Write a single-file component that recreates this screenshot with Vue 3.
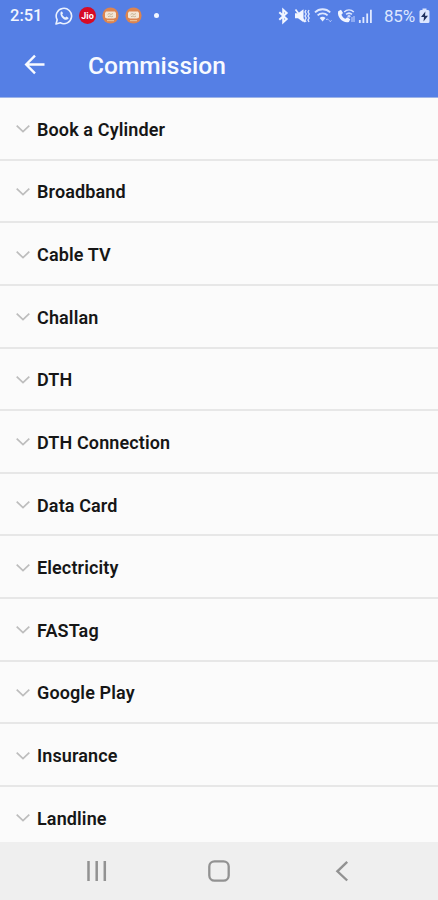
<script setup>
const categories = [
  'Book a Cylinder', 'Broadband', 'Cable TV', 'Challan', 'DTH', 'DTH Connection',
  'Data Card', 'Electricity', 'FASTag', 'Google Play', 'Insurance', 'Landline'
]
</script>

<template>
  <div class="screen">
    <header class="top">
      <div class="status">
        <span class="time">2:51</span>
        <svg class="whatsapp" width="18" height="18" viewBox="0 0 18 18" fill="none">
          <path d="M1 17 2.2 12.8A7.7 7.7 0 1 1 5.3 15.8Z" stroke="#eaf1ff" stroke-width="1.6" stroke-linejoin="round" />
          <path d="M5.7 4.9c.8-.8 1.4-.5 1.7.2l.6 1.4-.8 1.1c.7 1.4 1.7 2.3 3.1 2.9l1-1 1.8.9c.8.4.3 1.4-.3 1.9-3 2-8.7-3-7.1-7.4Z" fill="#eaf1ff" />
        </svg>
        <span class="jio">Jio</span>
        <svg v-for="n in 2" :key="n" class="app-badge" width="17" height="17" viewBox="0 0 17 17" fill="none">
          <circle cx="8.5" cy="8.5" r="8.1" fill="#dc8450" />
          <path d="M4 4.5h9l1 1.5v4.5l-2 1H5l-2-1V6Z" fill="#f4e6d5" />
          <path d="M5.5 7.8 7 6.5l2 1 2-1M6 9.7l2-.7 1.5.7 1.5-.5" stroke="#c9b595" stroke-width="1" />
          <path d="M5 13.6h7" stroke="#e9bd91" stroke-width="1.2" />
        </svg>
        <span class="dot"></span>
        <div class="system">
          <svg width="13" height="18" viewBox="0 0 13 18" fill="none" stroke="#f1f5ff" stroke-width="2">
            <path d="m2.3 5.2 7.4 6.9-3.5 3.2V2.7l3.5 3.2-7.4 6.9" />
          </svg>
          <svg width="17" height="18" viewBox="0 0 17 18" fill="none">
            <path d="M2 6.3h3l5.5-4v13L5 11.3H2Z" fill="#f1f5ff" />
            <path d="M2.5 2.5 12 15" stroke="#f1f5ff" stroke-width="1.7" />
            <path d="m13 3-1 2 1.2 2L12 9l1.2 2-1.2 2 1 2M16 3l-1 2 1.2 2L15 9l1.2 2-1.2 2 1 2" stroke="#e3ebff" stroke-width="1.3" />
          </svg>
          <svg width="19" height="18" viewBox="0 0 19 18" fill="none">
            <path d="M2 5.4c4.2-4.2 11-4.2 15.2 0M4.6 8.3c2.8-2.7 7.3-2.7 10 0" stroke="#dfe8ff" stroke-width="1.8" />
            <path d="M6.7 10.9c1.5-1.5 4.2-1.5 5.8 0l-2.9 3.6Z" fill="#e8efff" />
            <path d="m13.2 13 1.1-1.2 1.1 1.2M16.2 13.4l1.1 1.2 1.1-1.2" stroke="#c8d7ff" />
          </svg>
          <svg width="20" height="18" viewBox="0 0 20 18" fill="none">
            <path d="M3.2 4.2 6 2.8 8 6 6.4 7.7c.8 2 2.1 3.3 4.1 4.1l1.7-1.6 3.1 2-1.4 2.8C8.3 16.8 1.6 10 3.2 4.2Z" fill="#f1f5ff" />
            <path d="M9.2 5c2.8-2.6 6.8-2.6 9.6 0M11.1 7.4c1.7-1.5 4.2-1.5 5.8 0" stroke="#dfe8ff" stroke-width="1.6" />
            <path d="m12.6 9 1.4-1.1L15.4 9 14 10.5ZM17 10v5M19 9v6" fill="#e8efff" stroke="#c8d7ff" />
          </svg>
          <svg width="14" height="18" viewBox="0 0 14 18" fill="none">
            <path d="M1.8 13v3M5.4 10v6M9.2 6.5V16M12.9 2.8V16" stroke="#dfe8ff" stroke-width="1.8" />
          </svg>
          <span class="percent">85%</span>
          <svg class="battery" width="11" height="18" viewBox="0 0 11 18">
            <path d="M3.5 1.5h4V3H9q1.5 0 1.5 1.5v10Q10.5 16 9 16H2Q.5 16 .5 14.5v-10Q.5 3 2 3h1.5Z" fill="#dce6ff" />
            <path d="M6.4 4.5 2 10h3l-.5 4.5L9 8.8H6Z" fill="#20315f" />
          </svg>
        </div>
      </div>
      <div class="toolbar">
        <svg class="back" width="22" height="22" viewBox="0 0 22 22" fill="none" stroke="#f8faff" stroke-width="2.4">
          <path d="M20.5 10.5H3M11 1.7 2.2 10.5l8.8 8.8" />
        </svg>
        <h1>Commission</h1>
      </div>
    </header>

    <main class="list">
      <div v-for="category in categories" :key="category" class="item">
        <svg class="chevron" width="14" height="10" viewBox="0 0 14 10" fill="none" stroke="#bdbdbd" stroke-width="1.7">
          <path d="m.7 1.7 6.3 6 6.3-6" />
        </svg>
        <span class="label">{{ category }}</span>
      </div>
    </main>

    <nav class="navigation">
      <svg width="22" height="22" viewBox="0 0 22 22" fill="none" stroke="#929292" stroke-width="2.5">
        <path d="M3.5 1v20M11.7 1v20M19.8 1v20" />
      </svg>
      <svg width="24" height="24" viewBox="0 0 24 24" fill="none" stroke="#929292" stroke-width="2.3">
        <rect x="2.3" y="2.3" width="19.4" height="19.4" rx="5.2" />
      </svg>
      <svg width="22" height="22" viewBox="0 0 22 22" fill="none" stroke="#929292" stroke-width="2.4">
        <path d="M16.2 1.8 6.4 11.3l9.8 9.2" />
      </svg>
    </nav>
  </div>
</template>

<style>
body { margin: 0; overflow: hidden; }
</style>

<style scoped>
.screen {
  display: flex;
  flex-direction: column;
  width: 100%;
  height: 900px;
  overflow: hidden;
  background: #fbfbfb;
  font-family: Roboto, "Liberation Sans", sans-serif;
}
.screen svg { display: block; flex: none; }
.top {
  flex: none;
  box-sizing: border-box;
  height: 98px;
  background: #557fe5;
  border-bottom: 1px solid #9db4e8;
}
.status {
  display: flex;
  align-items: center;
  box-sizing: border-box;
  height: 31px;
  padding: 0 8px 0 10px;
  color: #f2f6ff;
}
.time { width: 45px; font-size: 16.5px; font-weight: 500; line-height: 20px; }
.jio {
  display: flex;
  align-items: center;
  justify-content: center;
  width: 17px;
  height: 17px;
  margin-left: 6px;
  border-radius: 50%;
  background: #d70b25;
  color: #fff;
  font-size: 9px;
  font-weight: 700;
}
.app-badge { margin-left: 6px; }
.dot { width: 5px; height: 5px; margin-left: 12px; border-radius: 50%; background: #f2f6ff; }
.system { display: flex; align-items: center; gap: 3px; margin-left: auto; }
.percent { margin-left: 9px; width: 32px; font-size: 17px; line-height: 20px; letter-spacing: -0.2px; color: #dce6ff; }
.toolbar { display: flex; align-items: center; height: 67px; padding-left: 24px; }
h1 { margin: 0 0 0 42px; padding-top: 2px; color: #f8faff; font-size: 24.5px; font-weight: 500; line-height: 32px; }
.list { flex: 1; min-height: 0; overflow: hidden; }
.item {
  display: flex;
  align-items: center;
  box-sizing: border-box;
  height: 62.64px;
  padding: 2px 0 0 16px;
  border-bottom: 2px solid #e7e7e7;
}
.label { margin-left: 7px; padding-top: 1px; color: #161616; font-size: 18px; font-weight: 600; line-height: 22px; letter-spacing: 0.12px; white-space: nowrap; }
.navigation {
  display: flex;
  align-items: center;
  justify-content: center;
  gap: 100px;
  flex: none;
  height: 58px;
  background: #efefef;
}
</style>
